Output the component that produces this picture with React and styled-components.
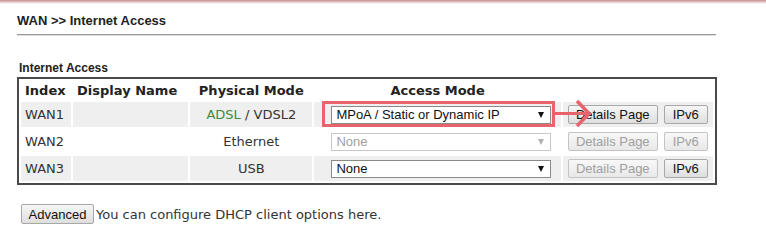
import React from "react";
import styled, { createGlobalStyle } from "styled-components";

const colors = {
  text: "#333333",
  heading: "#222222",
  rowShade: "#efefef",
  border: "#4a4a4a",
  rule: "#9a9a9a",
  green: "#3f8a3f",
  mark: "#e8636c",
  disabled: "#a0a0a0",
};

const GlobalStyle = createGlobalStyle`
  body {
    margin: 0;
    background: #ffffff;
  }
`;

const wans = [
  { index: "WAN1", physical: "vdsl", mode: "MPoA / Static or Dynamic IP", enabled: true, shaded: true },
  { index: "WAN2", physical: "Ethernet", mode: "None", enabled: false, shaded: false },
  { index: "WAN3", physical: "USB", mode: "None", enabled: true, shaded: true },
];

const App = () => {
  return (
    <>
      <GlobalStyle />
      <TopBar />
      <Page>
        <Title>WAN &gt;&gt; Internet Access</Title>
        <Rule />
        <SectionLabel>Internet Access</SectionLabel>
        <TableWrap>
          <Table>
            <thead>
              <tr>
                <Th style={{ width: 50 }}>Index</Th>
                <Th style={{ width: 115 }}>Display Name</Th>
                <Th $center style={{ width: 122 }}>Physical Mode</Th>
                <Th $center style={{ width: 246 }}>Access Mode</Th>
                <Th style={{ width: 150 }}></Th>
              </tr>
            </thead>
            <tbody>
              {wans.map((w) => (
                <tr key={w.index}>
                  <Td $shaded={w.shaded}>{w.index}</Td>
                  <Td $shaded={w.shaded}></Td>
                  <Td $shaded={w.shaded} $center>
                    {w.physical === "vdsl" ? (
                      <>
                        <Green>ADSL</Green> / VDSL2
                      </>
                    ) : (
                      w.physical
                    )}
                  </Td>
                  <ModeCell $shaded={w.shaded}>
                    <SelectBox $disabled={!w.enabled}>
                      <span>{w.mode}</span>
                      <Caret $disabled={!w.enabled} />
                    </SelectBox>
                  </ModeCell>
                  <ButtonCell $shaded={w.shaded}>
                    <Buttons>
                      <Button disabled={w.index !== "WAN1"} $width={90}>
                        Details Page
                      </Button>
                      <Button disabled={w.index === "WAN2"} $width={44}>
                        IPv6
                      </Button>
                    </Buttons>
                  </ButtonCell>
                </tr>
              ))}
            </tbody>
          </Table>
          <Annotation width="280" height="34" viewBox="0 0 280 34">
            <rect x="5.5" y="6.5" width="230" height="23" fill="none" stroke={colors.mark} strokeWidth="3" />
            <line x1="237" y1="17.5" x2="270" y2="17.5" stroke={colors.mark} strokeWidth="3" />
            <polyline
              points="259,5 271,17.5 259,30"
              fill="none"
              stroke={colors.mark}
              strokeWidth="3.5"
              strokeLinejoin="miter"
            />
          </Annotation>
        </TableWrap>
        <Footer>
          <Button $width={73}>Advanced</Button>
          <Hint>You can configure DHCP client options here.</Hint>
        </Footer>
      </Page>
    </>
  );
};

const TopBar = styled.div`
  height: 4px;
  background: linear-gradient(to bottom, #c48c8c, #ead4d4 60%, #ffffff);
`;

const Page = styled.div`
  width: 700px;
  padding-left: 17px;
`;

const Title = styled.div`
  margin-top: 9px;
  font-family: "Liberation Sans", Arial, sans-serif;
  font-weight: bold;
  font-size: 13px;
  line-height: 15px;
  color: ${colors.heading};
`;

const Rule = styled.div`
  margin-top: 6px;
  width: 699px;
  height: 1px;
  background: ${colors.rule};
  box-shadow: 0 1px 0 #dddddd;
`;

const SectionLabel = styled.div`
  margin-top: 26px;
  padding-left: 2px;
  font-family: "Liberation Sans", Arial, sans-serif;
  font-weight: bold;
  font-size: 12px;
  line-height: 14px;
  color: ${colors.heading};
`;

const TableWrap = styled.div`
  position: relative;
  margin-top: 2px;
`;

const Table = styled.table`
  width: 700px;
  table-layout: fixed;
  border-collapse: separate;
  border-spacing: 2px;
  border: 2px solid ${colors.border};
  font-family: "DejaVu Sans", Verdana, sans-serif;
  font-size: 13px;
  color: ${colors.text};
`;

const Th = styled.th`
  box-sizing: border-box;
  height: 19px;
  padding: 0 4px;
  font-size: 13px;
  font-weight: bold;
  color: ${colors.heading};
  text-align: ${(p) => (p.$center ? "center" : "left")};
  white-space: nowrap;
`;

const Td = styled.td`
  box-sizing: border-box;
  height: 25px;
  padding: 0 4px;
  background: ${(p) => (p.$shaded ? colors.rowShade : "transparent")};
  text-align: ${(p) => (p.$center ? "center" : "left")};
  white-space: nowrap;
`;

const ModeCell = styled(Td)`
  padding: 0 0 0 17px;
`;

const ButtonCell = styled(Td)`
  padding: 0 0 0 5px;
`;

const Green = styled.span`
  color: ${colors.green};
`;

const SelectBox = styled.div`
  box-sizing: border-box;
  display: flex;
  align-items: center;
  justify-content: space-between;
  width: 220px;
  height: 18px;
  padding: 0 6px 0 4px;
  background: #ffffff;
  border: 1px solid ${(p) => (p.$disabled ? "#c8c8c8" : "#8a8a8a")};
  font-family: "Liberation Sans", Arial, sans-serif;
  font-size: 13px;
  color: ${(p) => (p.$disabled ? colors.disabled : "#111111")};
`;

const Caret = styled.span`
  width: 0;
  height: 0;
  border-left: 3.5px solid transparent;
  border-right: 3.5px solid transparent;
  border-top: 6px solid ${(p) => (p.$disabled ? "#b0b0b0" : "#111111")};
`;

const Buttons = styled.div`
  display: flex;
  gap: 6px;
`;

const Button = styled.button`
  box-sizing: border-box;
  width: ${(p) => p.$width}px;
  height: 19px;
  padding: 0;
  border: 1px solid #a8a8a8;
  border-radius: 2px;
  background: linear-gradient(to bottom, #f6f6f6, #dedede);
  font-family: "Liberation Sans", Arial, sans-serif;
  font-size: 13px;
  line-height: 17px;
  color: #111111;

  &:disabled {
    color: ${colors.disabled};
    border-color: #c4c4c4;
    background: linear-gradient(to bottom, #f8f8f8, #e8e8e8);
  }
`;

const Annotation = styled.svg`
  position: absolute;
  left: 301px;
  top: 19px;
  pointer-events: none;
`;

const Footer = styled.div`
  display: flex;
  align-items: center;
  gap: 2px;
  margin-top: 19px;
  padding-left: 4px;

  ${Button} {
    height: 20px;
  }
`;

const Hint = styled.span`
  font-family: "DejaVu Sans", Verdana, sans-serif;
  font-size: 13px;
  color: ${colors.text};
`;

export default App;
